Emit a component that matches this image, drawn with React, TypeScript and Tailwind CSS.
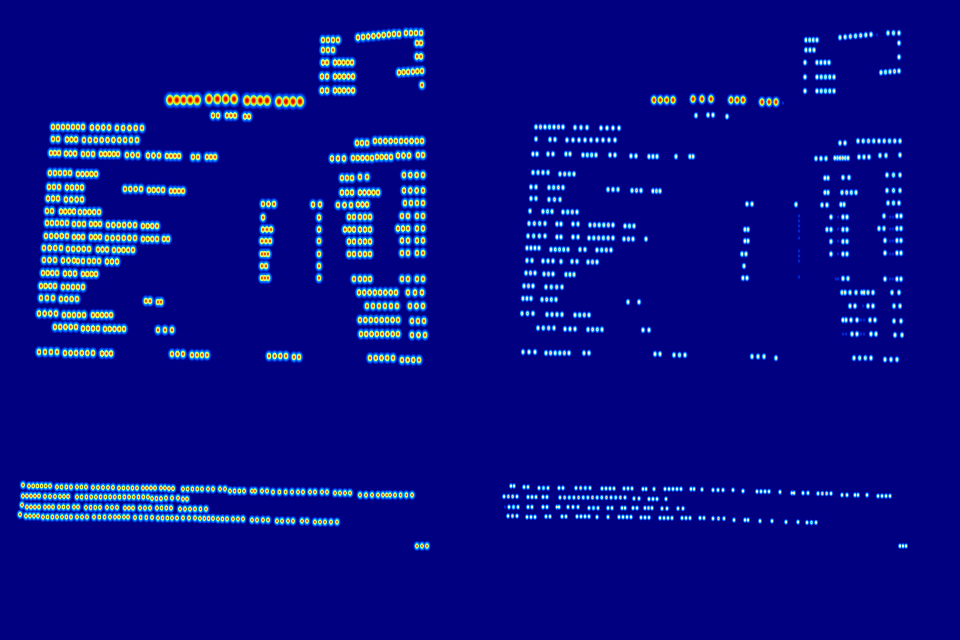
// text-score heatmap, two panels side by side
type Word = [number, number, number, number, number?]; // x0, x1, count, y0, y1

const leftTitle: Word[] = [
  [170, 197, 5, 100], [209, 234, 4, 99], [247, 267, 4, 100.5], [279, 300, 4, 101.5],
];

const leftWords: Word[] = [
  [213, 218, 2, 115.5], [227, 235, 3, 115.5], [245, 249, 2, 116.5],
  // top right block
  [323, 338, 4, 40], [323, 333, 3, 50], [323, 327, 2, 62.5], [335, 352, 5, 62.5],
  [322, 327, 2, 76.5], [335, 353, 5, 76.5], [322, 327, 2, 90.5], [335, 353, 5, 90.5],
  [358, 394, 8, 37.5, 34], [399, 399, 1, 34], [406, 421, 4, 33], [417, 421, 2, 43], [417, 421, 2, 56.5],
  [399, 422, 6, 72.5, 71], [422, 422, 1, 85],
  // left column
  [53, 83, 7, 127], [92, 109, 4, 127.5], [117, 142, 5, 128],
  [53, 58, 2, 139], [67, 76, 3, 139.5], [84, 137, 10, 140],
  [51, 59, 3, 153], [66, 75, 3, 153.5], [83, 93, 3, 154], [101, 118, 5, 154], [127, 138, 3, 155],
  [148, 159, 3, 155.5], [167, 179, 4, 156], [193, 198, 2, 157], [207, 215, 3, 157],
  [50, 70, 5, 173], [78, 96, 5, 174],
  [49, 59, 3, 187], [67, 82, 4, 187.5], [125, 141, 4, 189], [149, 163, 4, 190], [171, 183, 4, 191],
  [48, 58, 3, 198.5], [66, 82, 4, 199.5],
  [47, 52, 2, 211], [61, 74, 4, 211.5], [80, 99, 5, 212],
  [47, 67, 5, 223], [74, 84, 3, 224], [91, 100, 3, 224], [108, 135, 6, 225], [143, 157, 4, 226],
  [46, 67, 5, 236], [74, 83, 3, 237], [91, 100, 3, 237], [107, 135, 6, 238], [143, 157, 4, 239], [164, 168, 2, 239],
  [44, 61, 4, 248], [68, 89, 5, 249], [98, 107, 3, 249.5], [114, 133, 5, 250],
  [44, 55, 3, 260], [63, 74, 3, 260.5], [78, 83, 2, 261], [89, 99, 3, 261], [107, 117, 3, 261.5],
  [43, 57, 4, 273], [65, 75, 3, 273.5], [83, 96, 4, 274],
  [41, 55, 4, 286], [63, 83, 5, 287],
  [41, 53, 3, 298], [61, 77, 4, 299], [146, 150, 2, 301], [158, 161, 2, 302],
  [39, 56, 4, 313.5], [64, 84, 5, 315], [93, 111, 5, 315],
  [55, 76, 5, 327], [83, 98, 4, 328.5], [105, 124, 5, 329], [158, 172, 3, 330],
  [39, 57, 4, 352], [65, 93, 6, 353], [102, 111, 3, 353.5], [172, 183, 3, 354], [192, 207, 4, 355],
  // table columns
  [263, 274, 3, 204], [313, 320, 2, 204.5], [338, 351, 3, 205], [358, 367, 3, 204.5],
  [263, 263, 1, 217.5], [263, 271, 3, 229.5], [262, 270, 3, 241], [262, 268, 3, 254], [262, 266, 2, 266], [262, 268, 3, 278],
  [319, 319, 1, 217.5], [319, 319, 1, 229.5], [319, 319, 1, 241], [319, 319, 1, 254], [319, 319, 1, 266], [319, 319, 1, 278],
  [349, 354, 2, 217], [360, 370, 3, 217], [345, 354, 3, 229.5], [360, 370, 3, 229.5],
  [349, 354, 2, 241.5], [360, 370, 3, 241.5], [349, 354, 2, 254], [360, 370, 3, 254], [354, 354, 1, 279], [360, 370, 3, 279],
  [342, 352, 3, 178], [360, 367, 2, 177], [404, 423, 4, 175],
  [342, 352, 3, 192.5], [360, 378, 5, 192.5], [404, 423, 4, 190.5], [405, 423, 4, 203],
  [402, 408, 2, 216], [417, 423, 2, 216], [398, 408, 3, 228.5], [417, 423, 2, 228.5],
  [402, 408, 2, 240.5], [417, 423, 2, 240.5], [402, 408, 2, 253], [417, 423, 2, 253], [402, 408, 2, 279], [417, 423, 2, 279],
  // totals
  [359, 396, 8, 292.5], [408, 422, 3, 292.5], [367, 397, 6, 306], [410, 423, 3, 306],
  [360, 398, 8, 320], [412, 424, 3, 321], [361, 398, 8, 334], [412, 425, 3, 335],
  [269, 286, 4, 356], [294, 299, 2, 357], [370, 393, 5, 358], [402, 419, 4, 360],
  // right edge rows
  [357, 367, 3, 143], [375, 422, 10, 141], [332, 344, 3, 158.5], [353, 372, 5, 158],
  [377, 391, 4, 157], [398, 409, 3, 155.5], [418, 423, 2, 155],
];

const leftNotes: Word[] = [
  [23, 23, 1, 485], [29, 50, 6, 486], [57, 71, 4, 487], [77, 86, 3, 487], [93, 113, 5, 487.5], [119, 137, 5, 488],
  [143, 155, 4, 488], [161, 165, 2, 488], [169, 173, 2, 488.5], [183, 202, 5, 489], [208, 213, 2, 489], [220, 225, 2, 489],
  [230, 244, 4, 491], [252, 255, 2, 491], [262, 267, 2, 491], [273, 292, 4, 492], [298, 303, 2, 492], [310, 315, 2, 492],
  [322, 327, 2, 492], [335, 350, 4, 493], [360, 372, 3, 495], [378, 383, 2, 495], [387, 390, 2, 495], [395, 412, 4, 495],
  [23, 39, 5, 496], [45, 55, 3, 496.5], [60, 68, 3, 496.5], [77, 148, 16, 497], [152, 161, 3, 498.5], [166, 178, 3, 498], [183, 187, 2, 499],
  [22, 22, 1, 505], [27, 39, 4, 507], [45, 53, 3, 507], [59, 68, 3, 507], [74, 78, 2, 507], [86, 100, 4, 507.5],
  [107, 117, 3, 507.5], [125, 133, 3, 508], [140, 150, 3, 508], [157, 171, 4, 508], [180, 190, 3, 509], [195, 206, 3, 509],
  [20, 20, 1, 514.5], [26, 38, 4, 516], [43, 57, 4, 517], [62, 71, 3, 517], [77, 87, 3, 517], [94, 110, 4, 517], [115, 119, 2, 517],
  [124, 128, 2, 517], [135, 152, 4, 517.5], [158, 172, 4, 518], [177, 195, 4, 518], [200, 213, 4, 518.5], [218, 227, 3, 519],
  [233, 243, 3, 519], [252, 257, 2, 520], [263, 268, 2, 520], [277, 282, 2, 521], [288, 293, 2, 521], [302, 307, 2, 521], [315, 320, 2, 522],
  [325, 337, 3, 522],
  [417, 427, 3, 546],
];

const rightTitle: Word[] = [
  [654, 673, 4, 100], [693, 711, 3, 99], [731, 743, 3, 100], [762, 776, 3, 102],
];

const rightWords: Word[] = [
  [696, 696, 1, 115.5], [708, 713, 2, 115], [727, 727, 1, 116.5],
  [806, 817, 4, 40], [806, 814, 3, 50], [805, 805, 1, 62.5], [817, 829, 4, 62.5], [805, 805, 1, 77], [817, 834, 5, 77],
  [805, 805, 1, 91], [817, 834, 5, 91], [840, 871, 7, 37.5, 34.5], [888, 899, 3, 33], [899, 899, 1, 43], [899, 899, 1, 57],
  [881, 899, 5, 72.5, 71], [840, 845, 2, 143], [858, 900, 9, 141], [816, 826, 3, 158.5], [835, 848, 6, 158],
  [859, 869, 3, 157], [880, 886, 2, 155.5], [900, 900, 1, 155],
  [536, 563, 7, 127], [575, 587, 3, 127.5], [601, 619, 4, 128],
  [536, 536, 1, 139], [550, 555, 2, 139.5], [567, 615, 9, 140],
  [533, 537, 2, 154], [548, 553, 2, 154], [566, 570, 2, 154], [583, 596, 4, 155], [610, 615, 2, 155], [631, 636, 2, 156],
  [649, 657, 3, 156.5], [676, 676, 1, 156.5], [690, 693, 2, 156.5],
  [533, 548, 4, 172.5], [560, 574, 4, 174],
  [531, 536, 2, 187], [549, 563, 4, 187.5], [608, 618, 3, 189.5], [632, 641, 3, 190.5], [653, 660, 3, 191],
  [531, 536, 2, 198.5], [549, 560, 3, 199.5],
  [530, 530, 1, 211], [543, 552, 3, 211.5], [563, 577, 4, 212],
  [529, 545, 4, 223.5], [557, 561, 2, 224], [573, 578, 2, 224], [590, 613, 6, 225], [625, 634, 3, 226],
  [528, 545, 4, 236], [557, 561, 2, 237], [573, 578, 2, 237], [589, 613, 6, 238], [624, 633, 3, 239], [646, 646, 1, 239],
  [527, 539, 4, 248], [551, 568, 5, 249.5], [580, 585, 2, 249.5], [597, 611, 4, 250],
  [527, 532, 2, 260.5], [543, 553, 3, 261], [561, 561, 1, 261.5], [572, 577, 2, 261.5], [588, 597, 3, 262],
  [526, 535, 3, 273], [544, 553, 3, 274], [566, 574, 3, 274.5],
  [524, 533, 3, 286], [546, 562, 4, 287],
  [523, 531, 3, 298.5], [542, 556, 4, 299.5], [628, 628, 1, 302], [639, 639, 1, 302],
  [522, 533, 3, 313.5], [547, 562, 4, 314.5], [575, 589, 4, 315],
  [538, 554, 4, 328], [565, 575, 3, 329], [588, 602, 4, 329.5], [643, 649, 2, 330],
  [523, 535, 3, 352], [546, 569, 6, 353], [584, 589, 2, 353], [655, 660, 2, 354], [674, 685, 3, 355],
  [825, 828, 2, 178], [843, 849, 2, 177.5], [887, 900, 3, 175],
  [825, 828, 2, 192.5], [842, 856, 4, 192.5], [887, 900, 3, 190.5],
  [747, 752, 2, 204], [796, 796, 1, 204.5], [822, 827, 2, 205], [841, 844, 2, 204.5], [888, 899, 3, 203],
  [831, 831, 1, 217], [843, 847, 2, 217], [884, 884, 1, 216], [897, 901, 2, 216],
  [745, 748, 2, 229.5], [827, 831, 2, 229.5], [843, 847, 2, 229.5], [879, 884, 2, 228.5], [897, 901, 2, 228.5],
  [745, 748, 2, 241], [831, 831, 1, 241.5], [843, 847, 2, 241.5], [885, 885, 1, 240.5], [897, 901, 2, 240.5],
  [742, 746, 2, 254], [831, 831, 1, 254], [843, 847, 2, 254], [885, 885, 1, 253], [897, 901, 2, 253],
  [744, 744, 1, 266], [743, 747, 2, 278], [843, 848, 2, 278.5], [885, 885, 1, 279], [897, 901, 2, 279],
  [842, 845, 2, 292.5], [850, 856, 2, 292.5], [862, 864, 2, 292.5], [868, 873, 2, 292.5], [892, 899, 2, 292.5],
  [850, 855, 2, 306], [868, 873, 2, 306], [894, 900, 2, 306],
  [843, 846, 2, 320], [851, 857, 2, 320], [870, 875, 2, 320], [894, 901, 2, 321],
  [852, 857, 2, 334], [871, 876, 2, 334], [895, 902, 2, 335],
  [752, 764, 3, 356.5], [776, 776, 1, 358], [854, 871, 4, 358], [885, 897, 3, 359.5],
];

const rightNotes: Word[] = [
  [511, 514, 2, 486], [524, 528, 2, 487], [539, 548, 3, 488], [559, 563, 2, 488], [576, 590, 4, 488], [602, 614, 4, 488.5],
  [624, 632, 3, 488.5], [643, 646, 2, 489], [654, 654, 1, 489], [665, 681, 5, 489], [691, 694, 2, 489], [702, 702, 1, 489.5],
  [713, 723, 3, 490], [733, 733, 1, 490], [743, 743, 1, 491], [757, 769, 4, 491.5], [780, 780, 1, 492], [792, 794, 2, 493],
  [803, 808, 2, 493], [818, 831, 4, 493.5], [842, 847, 2, 495], [855, 858, 2, 495], [867, 867, 1, 495], [878, 890, 4, 496],
  [504, 517, 4, 496.5], [528, 536, 3, 497], [543, 547, 2, 497], [560, 625, 15, 497.5], [634, 639, 2, 498.5], [649, 657, 3, 499], [666, 666, 1, 499],
  [509, 518, 3, 507], [528, 532, 2, 507], [543, 547, 2, 507], [557, 559, 2, 507], [568, 578, 3, 507], [589, 598, 3, 508],
  [608, 612, 2, 508], [622, 625, 2, 508], [633, 637, 2, 508], [645, 652, 3, 508], [662, 667, 2, 508.5], [678, 683, 2, 508.5],
  [508, 517, 3, 516], [527, 535, 3, 517], [546, 550, 2, 516.5], [562, 566, 2, 516.5], [577, 589, 4, 516.5], [597, 597, 1, 517],
  [608, 608, 1, 517], [619, 631, 4, 517], [641, 649, 3, 517.5], [660, 672, 4, 518], [682, 690, 3, 518], [700, 704, 2, 518],
  [713, 724, 3, 518.5], [734, 734, 1, 520], [745, 748, 2, 520], [760, 760, 1, 521], [772, 772, 1, 521], [786, 786, 1, 522],
  [798, 798, 1, 522], [807, 816, 3, 522.5],
  [900, 906, 3, 546],
];

// the very faint spots of the right panel
const rightFaint: Word[] = [
  [783, 783, 1, 103], [877, 877, 1, 35], [799, 799, 1, 216], [799, 799, 1, 221], [799, 799, 1, 226], [799, 799, 1, 231],
  [799, 799, 1, 238], [799, 799, 1, 251], [799, 799, 1, 256], [799, 799, 1, 261], [799, 799, 1, 277],
  [838, 838, 1, 217], [838, 838, 1, 229], [838, 838, 1, 241], [838, 838, 1, 254], [836, 838, 2, 279],
  [890, 893, 2, 217], [890, 893, 2, 229], [890, 893, 2, 241], [890, 893, 2, 254], [890, 893, 2, 279],
  [863, 863, 1, 306], [861, 864, 2, 320], [861, 864, 2, 334], [843, 846, 2, 334],
  [505, 505, 1, 507], [633, 633, 1, 499],
];

function Blobs({ words, rx, ry, fill }: { words: Word[]; rx: number; ry: number; fill: string }) {
  return (
    <>
      {words.flatMap(([x0, x1, n, y0, y1 = y0], i) =>
        Array.from({ length: n }, (_, k) => {
          const t = n > 1 ? k / (n - 1) : 0;
          return (
            <ellipse
              key={`${i}-${k}`}
              cx={x0 + (x1 - x0) * t}
              cy={y0 + (y1 - y0) * t}
              rx={rx}
              ry={ry}
              fill={fill}
            />
          );
        })
      )}
    </>
  );
}

const App = () => {
  return (
    <div className="flex h-[640px] w-[960px] bg-[#000080]">
      <svg className="h-[640px] w-[480px] shrink-0" viewBox="0 0 480 640">
        <defs>
          <radialGradient id="halo">
            <stop offset="0%" stopColor="#60ffa0" />
            <stop offset="42%" stopColor="#00d0ff" />
            <stop offset="72%" stopColor="#0050ff" stopOpacity={0.8} />
            <stop offset="100%" stopColor="#0000c0" stopOpacity={0} />
          </radialGradient>
          <radialGradient id="core">
            <stop offset="0%" stopColor="#c81000" />
            <stop offset="26%" stopColor="#f06010" />
            <stop offset="52%" stopColor="#ffe840" />
            <stop offset="78%" stopColor="#c0ff90" />
            <stop offset="100%" stopColor="#80ffb0" stopOpacity={0} />
          </radialGradient>
          <radialGradient id="coreB">
            <stop offset="0%" stopColor="#b00000" />
            <stop offset="34%" stopColor="#ff2000" />
            <stop offset="58%" stopColor="#ffd000" />
            <stop offset="80%" stopColor="#a0ff70" />
            <stop offset="100%" stopColor="#60ffa0" stopOpacity={0} />
          </radialGradient>
        </defs>
        {/* halos go first so that a neighbour never covers a core */}
        <Blobs words={leftTitle} rx={7.6} ry={10} fill="url(#halo)" />
        <Blobs words={leftWords} rx={5} ry={7} fill="url(#halo)" />
        <Blobs words={leftNotes} rx={4.2} ry={5.8} fill="url(#halo)" />
        <Blobs words={leftTitle} rx={4.4} ry={6} fill="url(#coreB)" />
        <Blobs words={leftWords} rx={2.6} ry={3.7} fill="url(#core)" />
        <Blobs words={leftNotes} rx={2} ry={2.9} fill="url(#core)" />
      </svg>
      <svg className="h-[640px] w-[480px] shrink-0" viewBox="480 0 480 640">
        <defs>
          <radialGradient id="haloR">
            <stop offset="0%" stopColor="#a0ffe0" />
            <stop offset="50%" stopColor="#20b8ff" />
            <stop offset="78%" stopColor="#0040ff" stopOpacity={0.7} />
            <stop offset="100%" stopColor="#0000c0" stopOpacity={0} />
          </radialGradient>
          <radialGradient id="coreR">
            <stop offset="0%" stopColor="#c8a060" />
            <stop offset="40%" stopColor="#f8f8d0" />
            <stop offset="100%" stopColor="#e0fff0" stopOpacity={0} />
          </radialGradient>
          <radialGradient id="coreT">
            <stop offset="0%" stopColor="#c00000" />
            <stop offset="30%" stopColor="#ff3000" />
            <stop offset="60%" stopColor="#ffd800" />
            <stop offset="85%" stopColor="#a0ff60" />
            <stop offset="100%" stopColor="#60ffa0" stopOpacity={0} />
          </radialGradient>
          <radialGradient id="dim">
            <stop offset="0%" stopColor="#0050ff" />
            <stop offset="100%" stopColor="#0000c0" stopOpacity={0} />
          </radialGradient>
        </defs>
        <Blobs words={rightFaint} rx={2} ry={3} fill="url(#dim)" />
        <Blobs words={rightTitle} rx={5} ry={7} fill="url(#haloR)" />
        <Blobs words={rightWords} rx={2.9} ry={4.2} fill="url(#haloR)" />
        <Blobs words={rightNotes} rx={2.5} ry={3.5} fill="url(#haloR)" />
        <Blobs words={rightTitle} rx={2.8} ry={4} fill="url(#coreT)" />
        <Blobs words={rightWords} rx={1.5} ry={2.3} fill="url(#coreR)" />
        <Blobs words={rightNotes} rx={1.2} ry={1.8} fill="url(#coreR)" />
      </svg>
    </div>
  );
};

export default App;
